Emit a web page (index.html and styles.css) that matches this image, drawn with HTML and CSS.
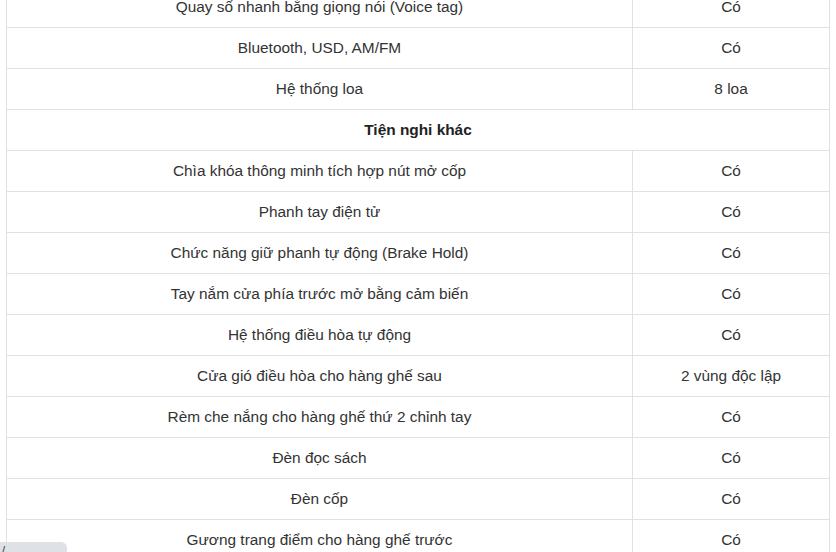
FILE: index.html
```html
<!DOCTYPE html>
<html lang="vi">
<head>
<meta charset="utf-8">
<link rel="stylesheet" href="styles.css">
</head>
<body>
<table class="spec">
  <colgroup><col class="c1"><col class="c2"></colgroup>
  <tbody>
    <tr><td>Quay số nhanh bằng giọng nói (Voice tag)</td><td>Có</td></tr>
    <tr><td>Bluetooth, USD, AM/FM</td><td>Có</td></tr>
    <tr><td>Hệ thống loa</td><td>8 loa</td></tr>
    <tr class="group"><td colspan="2">Tiện nghi khác</td></tr>
    <tr><td>Chìa khóa thông minh tích hợp nút mở cốp</td><td>Có</td></tr>
    <tr><td>Phanh tay điện tử</td><td>Có</td></tr>
    <tr><td>Chức năng giữ phanh tự động (Brake Hold)</td><td>Có</td></tr>
    <tr><td>Tay nắm cửa phía trước mở bằng cảm biến</td><td>Có</td></tr>
    <tr><td>Hệ thống điều hòa tự động</td><td>Có</td></tr>
    <tr><td>Cửa gió điều hòa cho hàng ghế sau</td><td>2 vùng độc lập</td></tr>
    <tr><td>Rèm che nắng cho hàng ghế thứ 2 chỉnh tay</td><td>Có</td></tr>
    <tr><td>Đèn đọc sách</td><td>Có</td></tr>
    <tr><td>Đèn cốp</td><td>Có</td></tr>
    <tr><td>Gương trang điểm cho hàng ghế trước</td><td>Có</td></tr>
  </tbody>
</table>
<div class="status">/ ...</div>
</body>
</html>
```
FILE: styles.css
```css
html, body {
  margin: 0;
  padding: 0;
  background: #fff;
  overflow: hidden;
}
body {
  font-family: "Liberation Sans", Arial, sans-serif;
  font-size: 15.4px;
  color: #333;
}
.spec {
  border-collapse: collapse;
  table-layout: fixed;
  width: 823px;
  margin: -14px 0 0 6px;
}
.spec .c1 { width: 626px; }
.spec .c2 { width: 197px; }
.spec td {
  border: 1px solid #e1e1e1;
  height: 41px;
  padding: 0 10px;
  text-align: center;
  vertical-align: middle;
  box-sizing: border-box;
  line-height: 20px;
}
.spec tr.group td {
  font-weight: bold;
  color: #222;
}
.status {
  position: fixed;
  left: 0;
  bottom: -8px;
  width: 67px;
  height: 18px;
  background: #dee1e6;
  border-top-right-radius: 6px;
  font-size: 11px;
  color: #333;
  padding-left: 2px;
  line-height: 16px;
  box-sizing: border-box;
}
```
